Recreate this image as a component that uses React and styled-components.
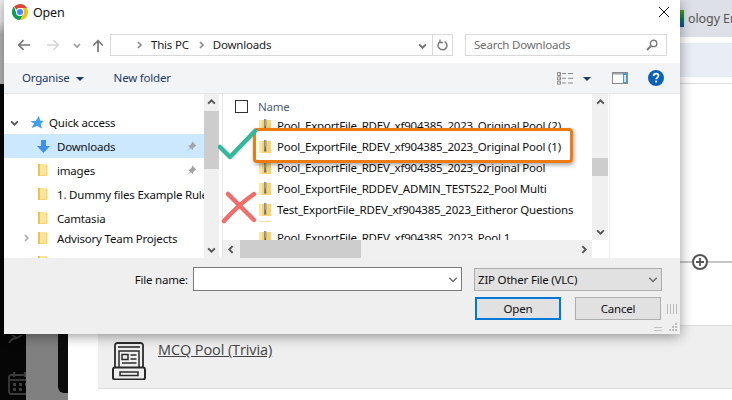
import styled, { createGlobalStyle } from 'styled-components';

const GlobalStyle = createGlobalStyle`
  html, body {
    margin: 0;
    padding: 0;
    background: #fff;
  }
  * {
    box-sizing: border-box;
  }
`;

const Page = styled.div`
  position: relative;
  width: 732px;
  height: 400px;
  overflow: hidden;
  display: flex;
  font-family: "Noto Sans", "Open Sans", sans-serif;
  font-size: 11.5px;
  letter-spacing: -0.2px;
  color: #111;
`;

/* page behind the dialog */
const Rail = styled.div`
  width: 68px;
  flex: none;
  display: flex;
  flex-direction: column;
`;

const RailTop = styled.div`
  height: 84px;
  background: linear-gradient(#f4f4f4 0, #f4f4f4 20px, #b9b9b9 34px, #b9b9b9 100%);
`;

const RailBody = styled.div`
  flex: 1;
  display: grid;
  grid-template-columns: 26px 32px 10px;
`;

const RailIcons = styled.div`
  background: #060606;
  overflow: hidden;
  display: flex;
  flex-direction: column;
  justify-content: flex-end;
  gap: 28px;
  padding: 0 0 5px 8px;
`;

const RailStrip = styled.div`
  background: #808080;
`;

const RailEdge = styled.div`
  background: #808080;
  padding-bottom: 7px;
  div {
    height: 100%;
    background: #0c0c0c;
    border-bottom-left-radius: 6px;
  }
`;

const Main = styled.div`
  flex: 1;
  min-width: 0;
  display: flex;
  flex-direction: column;
`;

const TopBar = styled.div`
  height: 37px;
  flex: none;
  background: #dde0e7;
  display: flex;
  align-items: center;
  padding: 0 0 0 611px;
  gap: 4px;
  font-size: 12.5px;
  letter-spacing: -0.1px;
  color: #555;
  white-space: nowrap;
`;

const LogoBar = styled.div`
  width: 5px;
  height: 17px;
  flex: none;
  background: linear-gradient(#5a9a2c, #0d7a5c 55%, #0a4fa8);
`;

const SubBar = styled.div`
  height: 34px;
  flex: none;
  margin-top: 6px;
  background: #e9edf6;
`;

const MainBody = styled.div`
  flex: 1;
  margin-top: 6px;
  border-top: 1px solid #dedede;
  display: flex;
  flex-direction: column;
`;

const AddRow = styled.div`
  margin-top: 170px;
  height: 16px;
  flex: none;
  display: flex;
  align-items: center;
`;

const AddLine = styled.div`
  height: 2px;
  background: #c6c6c6;
  flex: ${(p) => (p.$grow ? 1 : 'none')};
  width: ${(p) => (p.$grow ? 'auto' : '624px')};
`;

const PoolPanel = styled.div`
  margin: 55px 0 0 30px;
  height: 64px;
  flex: none;
  background: #efefef;
  border-top: 1px solid #dcdcdc;
  border-bottom: 1px solid #dedede;
  display: flex;
  align-items: flex-start;
  gap: 12px;
  padding: 16px 0 0 14px;
`;

const PoolTitle = styled.a`
  font-family: "Open Sans", sans-serif;
  font-size: 14.5px;
  letter-spacing: -0.1px;
  line-height: 16px;
  color: #444;
  text-decoration: underline;
`;

/* dialog window */
const Dialog = styled.div`
  position: absolute;
  left: 4px;
  top: 0;
  width: 676px;
  height: 334px;
  background: #fff;
  display: flex;
  flex-direction: column;
  box-shadow: 0 2px 12px rgba(0, 0, 0, 0.42);
`;

const TitleBar = styled.div`
  height: 34px;
  flex: none;
  display: flex;
  align-items: flex-start;
  padding: 4px 11px 0 8px;
  gap: 5px;
`;

const TitleText = styled.div`
  font-size: 12.5px;
  line-height: 18px;
  flex: 1;
  color: #111;
`;

const CloseBtn = styled.div`
  margin-top: 3px;
  width: 10px;
  height: 10px;
  display: flex;
`;

const AddressRow = styled.div`
  height: 29px;
  flex: none;
  display: flex;
  align-items: flex-start;
  padding-left: 13px;
`;

const NavIcons = styled.div`
  width: 93px;
  height: 22px;
  flex: none;
  display: flex;
  align-items: center;
`;

const NavIcon = styled.span`
  display: flex;
  flex: none;
  margin-left: ${(p) => p.$ml || 0}px;
`;

const AddressBox = styled.div`
  width: 343px;
  height: 22px;
  flex: none;
  border: 1px solid #d9d9d9;
  display: flex;
  align-items: center;
  padding-left: 24px;
`;

const Crumb = styled.span`
  color: #1c1c1c;
  margin-bottom: 2px;
`;

const CrumbSep = styled.span`
  display: flex;
  margin: 0 8px 0 ${(p) => p.$ml || 0}px;
`;

const AddressEnd = styled.div`
  margin-left: auto;
  height: 100%;
  display: flex;
  align-items: center;
`;

const RefreshCell = styled.div`
  width: 20px;
  height: 100%;
  margin-left: 5px;
  border-left: 1px solid #d9d9d9;
  display: flex;
  align-items: center;
  justify-content: center;
`;

const SearchBox = styled.div`
  width: 202px;
  height: 22px;
  flex: none;
  margin-left: 12px;
  border: 1px solid #d9d9d9;
  display: flex;
  align-items: center;
  justify-content: space-between;
  padding: 0 8px;
  color: #6d6d6d;
  span {
    margin-bottom: 2px;
  }
`;

const Toolbar = styled.div`
  height: 31px;
  flex: none;
  background: #f3f4f6;
  border-bottom: 1px solid #e6e6e6;
  display: flex;
  align-items: center;
  padding: 0 16px 0 18px;
  color: #1f3a68;
`;

const ToolText = styled.span`
  margin-left: ${(p) => p.$ml || 0}px;
  margin-bottom: 2px;
`;

const ToolRight = styled.div`
  margin-left: auto;
  display: flex;
  align-items: center;
`;

const Caret = styled.span`
  width: 0;
  height: 0;
  flex: none;
  border-left: 4px solid transparent;
  border-right: 4px solid transparent;
  border-top: 4px solid #1f3a68;
  margin: 1px 0 0 ${(p) => p.$ml || 0}px;
`;

const ToolIcon = styled.span`
  display: flex;
  flex: none;
  margin-left: ${(p) => p.$ml || 0}px;
`;

const Panes = styled.div`
  height: 164px;
  flex: none;
  display: flex;
  background: #fff;
`;

const NavPane = styled.div`
  width: 200px;
  flex: none;
  overflow: hidden;
  padding-top: 16px;
`;

const NavRow = styled.div`
  height: ${(p) => (p.$short ? 20 : 24)}px;
  padding-bottom: ${(p) => (p.$short ? 4 : 0)}px;
  display: flex;
  align-items: center;
  background: ${(p) => (p.$active ? '#cce8ff' : 'transparent')};
  white-space: nowrap;
  overflow: hidden;
`;

const NavSlot = styled.span`
  width: ${(p) => p.$w}px;
  flex: none;
  display: flex;
  align-items: center;
  padding-left: ${(p) => p.$pl || 0}px;
`;

const NavLabel = styled.span`
  flex: 1;
  min-width: 0;
  overflow: hidden;
`;

const PinSlot = styled.span`
  width: 15px;
  flex: none;
  margin-right: 3px;
  display: flex;
`;

const VBar = styled.div`
  width: ${(p) => p.$w || 15}px;
  flex: none;
  background: #f0f0f0;
  display: flex;
  flex-direction: column;
  align-items: stretch;
`;

const BarArrow = styled.div`
  height: 17px;
  flex: none;
  display: flex;
  align-items: center;
  justify-content: center;
`;

const VThumb = styled.div`
  height: ${(p) => p.$h}px;
  flex: none;
  margin-top: ${(p) => p.$mt || 0}px;
  background: #cdcdcd;
`;

const VFill = styled.div`
  flex: 1;
`;

const Splitter = styled.div`
  width: 4px;
  flex: none;
  border-right: 1px solid #e8e8e8;
`;

const FileArea = styled.div`
  width: 385px;
  flex: none;
  display: flex;
  flex-direction: column;
`;

const ListWrap = styled.div`
  height: 146px;
  flex: none;
  display: flex;
`;

const FileList = styled.div`
  flex: 1;
  min-width: 0;
  overflow: hidden;
  display: flex;
  flex-direction: column;
`;

const ListHead = styled.div`
  height: 21px;
  flex: none;
  display: flex;
  align-items: flex-end;
  padding-left: 12px;
  gap: 10px;
  color: #4c607a;
  span:last-child {
    margin-bottom: 1px;
  }
`;

const HeadBox = styled.span`
  width: 13px;
  height: 13px;
  border: 1px solid #333;
  background: #fff;
  margin-bottom: 2px;
`;

const FileRow = styled.div`
  height: 21px;
  flex: none;
  display: flex;
  align-items: center;
  gap: 6px;
  padding-left: 36px;
  white-space: nowrap;
  color: #111;
`;

const HiddenRow = styled.div`
  height: 7px;
  flex: none;
  padding: 1px 0 0 36px;
  div {
    width: 12px;
    height: 1px;
    background: #f3dc9a;
  }
`;

const HBar = styled.div`
  height: 18px;
  flex: none;
  display: flex;
`;

const HTrack = styled.div`
  width: 369px;
  flex: none;
  background: #f0f0f0;
  display: flex;
  align-items: stretch;
`;

const HArrow = styled.div`
  width: 17px;
  flex: none;
  display: flex;
  align-items: center;
  justify-content: center;
`;

const HThumb = styled.div`
  width: 121px;
  flex: none;
  background: #cdcdcd;
`;

const PreviewPane = styled.div`
  flex: 1;
  margin-left: 1px;
  border-left: 1px solid #eee;
`;

const Footer = styled.div`
  flex: 1;
  background: #efefef;
  display: flex;
  flex-direction: column;
  position: relative;
  padding-top: 9px;
`;

const FieldRow = styled.div`
  display: flex;
  height: 24px;
  align-items: center;
`;

const FieldLabel = styled.span`
  width: 184px;
  flex: none;
  text-align: right;
  margin-right: 5px;
`;

const NameInput = styled.div`
  width: 269px;
  height: 24px;
  flex: none;
  background: #fff;
  border: 1px solid #7a7a7a;
  display: flex;
  align-items: center;
  justify-content: flex-end;
  padding-right: 3px;
`;

const TypeSelect = styled.div`
  width: 188px;
  height: 23px;
  flex: none;
  margin-left: 12px;
  background: #e1e1e1;
  border: 1px solid #adadad;
  display: flex;
  align-items: center;
  justify-content: space-between;
  padding: 0 3px;
`;

const ButtonRow = styled.div`
  display: flex;
  margin: 6px 0 0 471px;
  gap: 14px;
  align-items: center;
`;

const DialogButton = styled.button`
  width: 86px;
  height: 23px;
  padding: 0;
  font: inherit;
  letter-spacing: inherit;
  color: #111;
  background: #e1e1e1;
  border: ${(p) => (p.$primary ? '2px solid #0078d7' : '1px solid #adadad')};
`;

const Gripper = styled.div`
  width: 10px;
  height: 10px;
  flex: none;
  margin-left: -8px;
  background: repeating-linear-gradient(90deg, #bdbdbd 0 1px, transparent 1px 3px);
`;

const ResizeGrip = styled.div`
  position: absolute;
  right: 3px;
  bottom: 3px;
  display: flex;
  align-items: flex-end;
  gap: 7px;
`;

const GripLines = styled.div`
  width: 8px;
  height: 4px;
  border-top: 1px solid #c4c4c4;
  border-bottom: 1px solid #c4c4c4;
`;

/* hand-drawn annotations over the list */
const HighlightBox = styled.div`
  position: absolute;
  left: 253px;
  top: 128px;
  width: 320px;
  height: 35px;
  border: 3px solid #ee7b11;
  border-radius: 4px;
  box-shadow: 1px 2px 4px rgba(0, 0, 0, 0.35);
  pointer-events: none;
`;

const HighlightMask = styled.div`
  position: absolute;
  left: 256px;
  top: 131px;
  width: 314px;
  height: 4px;
  background: #fff;
`;

const Mark = styled.svg`
  position: absolute;
  left: ${(p) => p.$x}px;
  top: ${(p) => p.$y}px;
  overflow: visible;
`;

const Chevron = ({ dir = 'right', color = '#888', size = 8, w = 1.6 }) => {
  const paths = {
    right: 'M3 1l3 3-3 3',
    left: 'M5 1L2 4l3 3',
    down: 'M1 3l3 3 3-3',
    up: 'M1 5l3-3 3 3',
  };
  return (
    <svg width={size} height={size} viewBox="0 0 8 8" fill="none">
      <path d={paths[dir]} stroke={color} strokeWidth={w} />
    </svg>
  );
};

const ChromeIcon = () => (
  <svg width="16" height="16" viewBox="0 0 16 16" style={{ flex: 'none' }}>
    <path d="M8 0a8 8 0 0 1 6.93 4H8a4 4 0 0 0-3.46 2L2.07 2.6A8 8 0 0 1 8 0z" fill="#db4437" />
    <path d="M14.93 4A8 8 0 0 1 8 16l3.46-6a4 4 0 0 0 0-4l-.6-2z" fill="#f4c20d" />
    <path d="M2.07 2.6A8 8 0 0 0 8 16l3.46-6a4 4 0 0 1-6.92 0z" fill="#0f9d58" />
    <circle cx="8" cy="8" r="4" fill="#fff" />
    <circle cx="8" cy="8" r="3" fill="#4285f4" />
  </svg>
);

const ArrowLeft = ({ color }) => (
  <svg width="13" height="12" viewBox="0 0 13 12" fill="none">
    <path d="M13 6H2M6.5 1.2L1.7 6l4.8 4.8" stroke={color} strokeWidth="1.7" />
  </svg>
);

const ArrowRight = ({ color }) => (
  <svg width="13" height="12" viewBox="0 0 13 12" fill="none">
    <path d="M0 6h11M6.5 1.2L11.3 6l-4.8 4.8" stroke={color} strokeWidth="1.5" />
  </svg>
);

const ArrowUp = () => (
  <svg width="12" height="13" viewBox="0 0 12 13" fill="none">
    <path d="M6 13V2M1.2 6.5L6 1.7l4.8 4.8" stroke="#777" strokeWidth="1.7" />
  </svg>
);

const RefreshIcon = () => (
  <svg width="11" height="12" viewBox="0 0 11 12" fill="none">
    <path d="M7.6 2.6a4.4 4.4 0 1 1-4.4.1" stroke="#777" strokeWidth="1.5" />
    <path d="M3 0.5v3h3" stroke="#777" strokeWidth="1.3" />
  </svg>
);

const SearchIcon = () => (
  <svg width="12" height="12" viewBox="0 0 12 12" fill="none">
    <circle cx="7.6" cy="4.4" r="3.2" stroke="#7a7a7a" strokeWidth="1.4" />
    <path d="M5.2 6.8L1 11" stroke="#7a7a7a" strokeWidth="2" />
  </svg>
);

const ViewIcon = () => (
  <svg width="16" height="13" viewBox="0 0 16 13" fill="none">
    <path d="M.5.5h3v3h-3zM.5 4.8h3v3h-3zM.5 9.2h3v3h-3z" stroke="#8a8a8a" />
    <path d="M2 2h.5M2 6.3h.5M2 10.7h.5" stroke="#c0392b" />
    <path d="M5 1.500h4M11 1.500h5M5 6.300h4M11 6.300h5M5 11h4M11 11h5" stroke="#8a8a8a" />
  </svg>
);

const PaneIcon = () => (
  <svg width="16" height="12" viewBox="0 0 16 12">
    <rect x=".5" y=".5" width="15" height="11" fill="#fff" stroke="#8a8a8a" />
    <rect x="1" y="1" width="14" height="1.6" fill="#a8a8a8" />
    <rect x="11" y="1" width="4" height="10" fill="#4a9ae0" />
    <rect x="12" y="3" width="2" height="7" fill="#cfe4f7" />
  </svg>
);

const HelpIcon = () => (
  <svg width="16" height="16" viewBox="0 0 16 16">
    <circle cx="8" cy="8" r="8" fill="#0a62b8" />
    <path d="M5.6 6.1c0-1.500 1-2.400 2.500-2.400s2.400.8 2.400 2c0 1.900-2.300 1.800-2.300 3.500" fill="none" stroke="#fff" strokeWidth="1.7" />
    <rect x="7.2" y="10.6" width="1.8" height="1.8" fill="#fff" />
  </svg>
);

const StarIcon = () => (
  <svg width="14" height="14" viewBox="0 0 14 14">
    <path d="M9 .8l1 4.600 3.800.6-3 2.700 1 4.900-4.400-2.700L1.600 13l2.400-4.300L.6 6h5z" fill="#3f9ff0" />
  </svg>
);

const DownloadIcon = () => (
  <svg width="13" height="13" viewBox="0 0 13 13">
    <path d="M4 0h5v6h4l-6.500 7L0 6h4z" fill="#3f8fe6" />
  </svg>
);

const PinIcon = () => (
  <svg width="11" height="11" viewBox="0 0 11 11">
    <path d="M6.300.6l4.100 4.100-1.300.5-2 2-.2 1.900L4.800 7.300 1 10.500l3.100-3.800L2 4.700l1.800-.3 2-2z" fill="#a3a3a3" />
  </svg>
);

const FolderIcon = () => (
  <svg width="10" height="14" viewBox="0 0 10 14">
    <path d="M0 1h8l1.500 1v11H1l-1-1z" fill="#f7d774" />
    <path d="M2 1h6v11H2z" fill="#fbe49c" />
    <path d="M0 1h2v12H0z" fill="#f0c44c" />
  </svg>
);

const ZipIcon = () => (
  <svg width="12" height="14" viewBox="0 0 12 14" style={{ flex: 'none' }}>
    <path d="M0 1h12v12H0z" fill="#f6d475" />
    <path d="M0 1h3v12H0z" fill="#fbe6a8" />
    <path d="M5 0h2.400v7H5z" fill="#8d8d8d" />
    <path d="M5.300 7h1.800l.3 4.500H5z" fill="#6f6f6f" />
    <path d="M5.800 1h.8M5.800 3h.8M5.800 5h.8" stroke="#ddd" strokeWidth=".7" />
  </svg>
);

const PlusCircle = () => (
  <svg width="16" height="16" viewBox="0 0 16 16" fill="none" style={{ flex: 'none' }}>
    <circle cx="8" cy="8" r="7" stroke="#555" strokeWidth="2" />
    <path d="M8 4v8M4 8h8" stroke="#555" strokeWidth="1.8" />
  </svg>
);

const PoolIcon = () => (
  <svg width="34" height="38" viewBox="0 0 34 38" fill="none" stroke="#2b2b2b" style={{ flex: 'none' }}>
    <path d="M3 26V3.500A2.500 2.500 0 0 1 5.500 1h23A2.500 2.500 0 0 1 31 3.500V26" strokeWidth="1.800" />
    <path d="M6 5h22" strokeWidth="1.600" />
    <path d="M7 26V9h20v17" strokeWidth="1.500" />
    <path d="M10 12.500h6v5h-6z" strokeWidth="1.500" />
    <path d="M18.500 13h6M18.500 17h6M10 21h14.500" strokeWidth="1.500" />
    <rect x="1" y="25.500" width="32" height="12" rx="2" strokeWidth="2" />
    <rect x="8" y="30" width="18" height="3.500" strokeWidth="1.500" />
  </svg>
);

const UserStub = () => (
  <svg width="18" height="8" viewBox="0 0 18 8" fill="none" style={{ flex: 'none' }}>
    <path d="M4 0l5 3 5-3M1 8c1.500-3 5-5 8-5" stroke="#3a3a3a" strokeWidth="1.800" />
  </svg>
);

const CalendarIcon = () => (
  <svg width="24" height="24" viewBox="0 0 24 24" fill="none" style={{ flex: 'none' }}>
    <rect x="1" y="4" width="22" height="19" rx="2" stroke="#3c3c3c" strokeWidth="1.800" />
    <path d="M1 9h22" stroke="#3c3c3c" strokeWidth="1.800" />
    <path d="M6 1v5M17 1v5" stroke="#3c3c3c" strokeWidth="2.200" />
    <path d="M5 12h3v3H5zM11 12h3v3h-3zM17 12h3v3h-3zM5 17h3v3H5zM11 17h3v3h-3z" fill="#3c3c3c" />
  </svg>
);

const quickLinks = [
  { label: 'images', pin: true },
  { label: '1. Dummy files Example Rules' },
  { label: 'Camtasia' },
];

const files = [
  'Pool_ExportFile_RDEV_xf904385_2023_Original Pool (2)',
  'Pool_ExportFile_RDEV_xf904385_2023_Original Pool (1)',
  'Pool_ExportFile_RDEV_xf904385_2023_Original Pool',
  'Pool_ExportFile_RDDEV_ADMIN_TESTS22_Pool Multi',
  'Test_ExportFile_RDEV_xf904385_2023_Eitheror Questions',
];

const App = () => {
  return (
    <>
      <GlobalStyle />
      <Page>
        <Rail>
          <RailTop />
          <RailBody>
            <RailIcons>
              <UserStub />
              <CalendarIcon />
            </RailIcons>
            <RailStrip />
            <RailEdge>
              <div />
            </RailEdge>
          </RailBody>
        </Rail>

        <Main>
          <TopBar>
            <LogoBar />
            <span>ology Enhanced</span>
          </TopBar>
          <SubBar />
          <MainBody>
            <AddRow>
              <AddLine />
              <PlusCircle />
              <AddLine $grow />
            </AddRow>
            <PoolPanel>
              <PoolIcon />
              <PoolTitle>MCQ Pool (Trivia)</PoolTitle>
            </PoolPanel>
          </MainBody>
        </Main>

        <Dialog>
          <TitleBar>
            <ChromeIcon />
            <TitleText>Open</TitleText>
            <CloseBtn>
              <svg width="10" height="10" viewBox="0 0 10 10">
                <path d="M0 0l10 10M10 0L0 10" stroke="#111" strokeWidth="1" />
              </svg>
            </CloseBtn>
          </TitleBar>

          <AddressRow>
            <NavIcons>
              <NavIcon><ArrowLeft color="#777" /></NavIcon>
              <NavIcon $ml={17}><ArrowRight color="#d6d6d6" /></NavIcon>
              <NavIcon $ml={13}><Chevron dir="down" color="#999" /></NavIcon>
              <NavIcon $ml={11}><ArrowUp /></NavIcon>
            </NavIcons>
            <AddressBox>
              <CrumbSep><Chevron color="#888" /></CrumbSep>
              <Crumb>This PC</Crumb>
              <CrumbSep $ml={8}><Chevron color="#888" /></CrumbSep>
              <Crumb>Downloads</Crumb>
              <AddressEnd>
                <Chevron dir="down" color="#777" size={9} w={1.8} />
                <RefreshCell><RefreshIcon /></RefreshCell>
              </AddressEnd>
            </AddressBox>
            <SearchBox>
              <span>Search Downloads</span>
              <SearchIcon />
            </SearchBox>
          </AddressRow>

          <Toolbar>
            <ToolText>Organise</ToolText>
            <Caret $ml={6} />
            <ToolText $ml={30}>New folder</ToolText>
            <ToolRight>
              <ToolIcon><ViewIcon /></ToolIcon>
              <Caret $ml={10} />
              <ToolIcon $ml={21}><PaneIcon /></ToolIcon>
              <ToolIcon $ml={20}><HelpIcon /></ToolIcon>
            </ToolRight>
          </Toolbar>

          <Panes>
            <NavPane>
              <NavRow>
                <NavSlot $w={26} $pl={6}><Chevron dir="down" color="#555" size={9} /></NavSlot>
                <NavSlot $w={19}><StarIcon /></NavSlot>
                <NavLabel>Quick access</NavLabel>
              </NavRow>
              <NavRow $active>
                <NavSlot $w={53} $pl={33}><DownloadIcon /></NavSlot>
                <NavLabel>Downloads</NavLabel>
                <PinSlot><PinIcon /></PinSlot>
              </NavRow>
              {quickLinks.map((link) => (
                <NavRow key={link.label}>
                  <NavSlot $w={53} $pl={34}><FolderIcon /></NavSlot>
                  <NavLabel>{link.label}</NavLabel>
                  {link.pin && <PinSlot><PinIcon /></PinSlot>}
                </NavRow>
              ))}
              <NavRow $short>
                <NavSlot $w={34} $pl={18}><Chevron color="#aaa" size={8} /></NavSlot>
                <NavSlot $w={19}><FolderIcon /></NavSlot>
                <NavLabel>Advisory Team Projects</NavLabel>
              </NavRow>
              <NavRow>
                <NavSlot $w={53} $pl={34}><FolderIcon /></NavSlot>
                <NavLabel>Assets</NavLabel>
              </NavRow>
            </NavPane>
            <VBar>
              <BarArrow><Chevron dir="up" color="#555" size={9} w={1.7} /></BarArrow>
              <VThumb $h={58} />
              <VFill />
              <BarArrow><Chevron dir="down" color="#555" size={9} w={1.7} /></BarArrow>
            </VBar>
            <Splitter />
            <FileArea>
              <ListWrap>
                <FileList>
                  <ListHead>
                    <HeadBox />
                    <span>Name</span>
                  </ListHead>
                  {files.map((name) => (
                    <FileRow key={name}>
                      <ZipIcon />
                      <span>{name}</span>
                    </FileRow>
                  ))}
                  <HiddenRow><div /></HiddenRow>
                  <FileRow>
                    <ZipIcon />
                    <span>Pool_ExportFile_RDEV_xf904385_2023_Pool 1</span>
                  </FileRow>
                </FileList>
                <VBar $w={16}>
                  <BarArrow><Chevron dir="up" color="#555" size={9} w={1.7} /></BarArrow>
                  <VThumb $h={18} $mt={47} />
                  <VFill />
                  <BarArrow><Chevron dir="down" color="#555" size={9} w={1.7} /></BarArrow>
                </VBar>
              </ListWrap>
              <HBar>
                <HTrack>
                  <HArrow><Chevron dir="left" color="#555" size={9} w={1.7} /></HArrow>
                  <HThumb />
                  <VFill />
                  <HArrow><Chevron color="#555" size={9} w={1.7} /></HArrow>
                </HTrack>
              </HBar>
            </FileArea>
            <PreviewPane />
          </Panes>

          <Footer>
            <FieldRow>
              <FieldLabel>File name:</FieldLabel>
              <NameInput><Chevron dir="down" color="#666" size={10} w={1} /></NameInput>
              <TypeSelect>
                <span>ZIP Other File (VLC)</span>
                <Chevron dir="down" color="#666" size={10} w={1} />
              </TypeSelect>
            </FieldRow>
            <ButtonRow>
              <DialogButton $primary>Open</DialogButton>
              <DialogButton>Cancel</DialogButton>
              <Gripper />
            </ButtonRow>
            <ResizeGrip>
              <GripLines />
              <svg width="8" height="8" viewBox="0 0 8 8">
                <path d="M6 0h2v2H6zM3 3h2v2H3zM6 3h2v2H6zM0 6h2v2H0zM3 6h2v2H3zM6 6h2v2H6z" fill="#bdbdbd" />
              </svg>
            </ResizeGrip>
          </Footer>
        </Dialog>

        <HighlightMask />
        <HighlightBox />
        <Mark $x={218} $y={129} width="40" height="32" viewBox="0 0 40 32" fill="none">
          <path d="M2 18l10 10L37 2" stroke="#2fb89a" strokeWidth="4.500" strokeLinecap="round" strokeLinejoin="round" />
        </Mark>
        <Mark $x={222} $y={192} width="34" height="31" viewBox="0 0 34 31" fill="none">
          <path d="M6 2l26 26M32 2C22 9 10 20 2 29" stroke="#f46b6b" strokeWidth="4.500" strokeLinecap="round" />
        </Mark>
      </Page>
    </>
  );
};

export default App;
